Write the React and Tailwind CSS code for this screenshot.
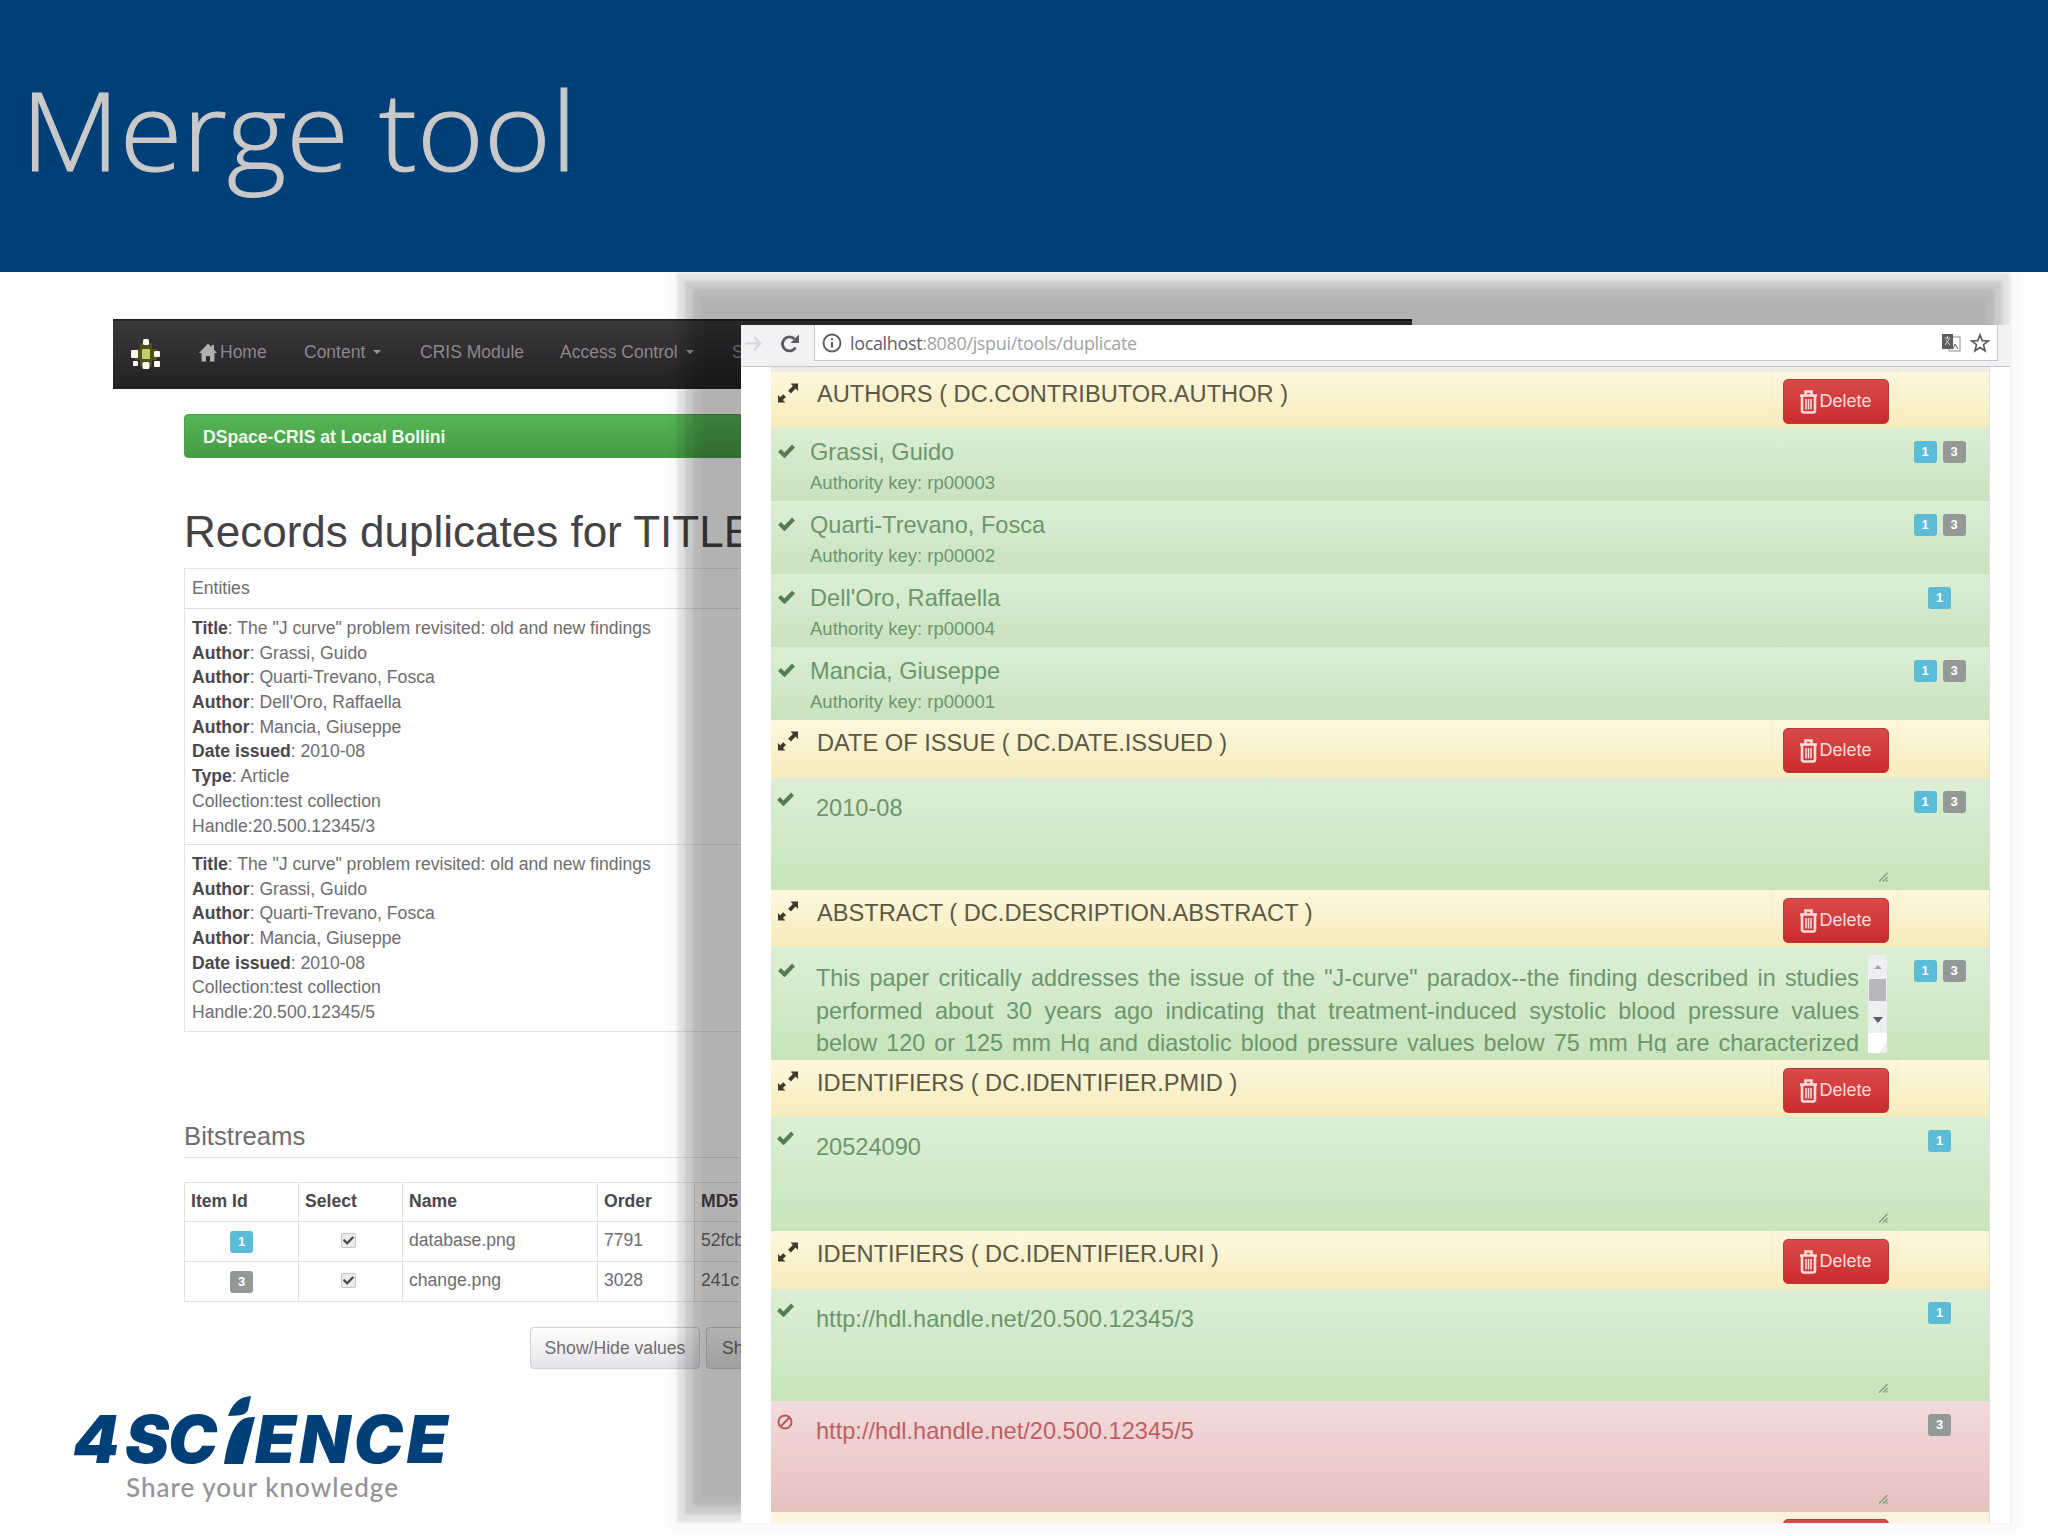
import { FaCheck } from "react-icons/fa"

const records = [
    {
        rows: [
            ["Title", ": The \"J curve\" problem revisited: old and new findings"],
            ["Author", ": Grassi, Guido"],
            ["Author", ": Quarti-Trevano, Fosca"],
            ["Author", ": Dell'Oro, Raffaella"],
            ["Author", ": Mancia, Giuseppe"],
            ["Date issued", ": 2010-08"],
            ["Type", ": Article"],
            ["", "Collection:test collection"],
            ["", "Handle:20.500.12345/3"],
        ],
    },
    {
        rows: [
            ["Title", ": The \"J curve\" problem revisited: old and new findings"],
            ["Author", ": Grassi, Guido"],
            ["Author", ": Quarti-Trevano, Fosca"],
            ["Author", ": Mancia, Giuseppe"],
            ["Date issued", ": 2010-08"],
            ["", "Collection:test collection"],
            ["", "Handle:20.500.12345/5"],
        ],
    },
]

const authors = [
    { name: "Grassi, Guido", key: "rp00003", ids: [1, 3] },
    { name: "Quarti-Trevano, Fosca", key: "rp00002", ids: [1, 3] },
    { name: "Dell'Oro, Raffaella", key: "rp00004", ids: [1] },
    { name: "Mancia, Giuseppe", key: "rp00001", ids: [1, 3] },
]

const abstractLines = [
    "This paper critically addresses the issue of the \"J-curve\" paradox--the finding described in studies",
    "performed about 30 years ago indicating that treatment-induced systolic blood pressure values",
    "below 120 or 125 mm Hg and diastolic blood pressure values below 75 mm Hg are characterized",
]

const Badge = ({ id }) => (
    <span className={`flex h-[22px] w-[23px] items-center justify-center rounded-[3px] text-[13px] font-bold text-white ${id === 1 ? "bg-[#5bbcd8]" : "bg-[#949896]"}`}>
        {id}
    </span>
)

const Badges = ({ ids }) => (
    <div className="flex w-[92px] shrink-0 items-start justify-center gap-[6px] pr-[7px] pt-[13px]">
        {ids.map((id) => <Badge key={id} id={id} />)}
    </div>
)

const CheckMark = ({ className }) => (
    <svg viewBox="0 0 17 14" className={`h-[14px] w-[17px] ${className}`} fill="none" stroke="#547d54" strokeWidth="4">
        <path d="M1.500 6.500l5 5L15.500 2" />
    </svg>
)

const ExpandIcon = () => (
    <svg viewBox="0 0 22 22" className="mt-[10px] h-[22px] w-[22px]" fill="#3f3b2c">
        <path d="M13.500 1.500h7.500v7.500l-2.400-2.400-4.700 4.900-2.800-2.800 4.800-4.800zM1 20.500v-7.500l2.200 2.200 3-3 2.800 2.800-3.100 3 2.600 2.500z" />
    </svg>
)

const TrashIcon = () => (
    <svg viewBox="0 0 19 24" className="h-6 w-[19px]" fill="none" stroke="#fbdcdc">
        <path d="M1 5.500h17M6.500 5V1.500h6V5" strokeWidth="2.600" />
        <path d="M3 6v14.500q0 2 2 2h9q2 0 2-2V6" strokeWidth="2.600" />
        <path d="M7 9v10.500M9.500 9v10.500M12 9v10.500" strokeWidth="1.500" />
    </svg>
)

const HomeIcon = () => (
    <svg viewBox="0 0 18 18" className="-mt-[6px] ml-[37px] h-[19px] w-[18px]" fill="#b1afb2">
        <path d="M9 0L0 9.500h2.500V18h4.500v-5.500h4V18h4.500V9.500H18l-3-3.200V1.500h-2.500v2.200z" />
    </svg>
)

const BanIcon = () => (
    <svg viewBox="0 0 16 16" className="mt-[11px] h-4 w-4" fill="none" stroke="#b8575a" strokeWidth="2">
        <circle cx="8" cy="8" r="6.500" />
        <path d="M3.500 12.500l9-9" />
    </svg>
)

const ResizeGrip = () => (
    <svg viewBox="0 0 10 10" className="absolute right-[9px] bottom-[8px] h-[10px] w-[10px]" stroke="#7d9a7b" fill="none">
        <path d="M1 9.500l8.500-8.500M5 9.500l4.500-4.500M8 9.500l1.500-1.500" strokeWidth="1.200" />
    </svg>
)

const DeleteButton = () => (
    <button className="flex h-[45px] w-[106px] items-center justify-center rounded-[5px] border border-[#b93c3c] bg-linear-to-b from-[#d94a48] to-[#cb2a2d] pr-px text-[18px] text-[#fbdcdc]">
        <TrashIcon />
        <span className="ml-px">Delete</span>
    </button>
)

const SectionHeader = ({ label, height = "h-[57px]", pad = "pt-2" }) => (
    <div className={`flex shrink-0 items-start bg-linear-to-b from-[#fdf7de] to-[#f7ecbb] pl-[6px] ${height}`}>
        <ExpandIcon />
        <div className={`ml-[18px] flex-1 whitespace-pre text-[23.650px] leading-[30px] text-[#5d5842] ${pad}`}>{label}</div>
        <div className={`w-[126px] border-l border-[#f8eec6] pl-[11px] ${pad}`}>
            <DeleteButton />
        </div>
        <div className="h-full w-[92px] border-l border-[#f8eec6]" />
    </div>
)

const TextRow = ({ text, ids, height, danger }) => (
    <div className={`flex shrink-0 items-start pl-[6px] bg-linear-to-b ${height} ${danger ? "from-[#f3dbdd] to-[#e5c1bd] text-[#bd6163]" : "from-[#dcefd6] to-[#c8e4bd] text-[#6d966d]"}`}>
        <div className="w-[39px] pt-[2px]">
            {danger ? <BanIcon /> : <CheckMark className="mt-[12px]" />}
        </div>
        <div className="relative h-full flex-1 pt-[15px] text-[23.600px] leading-[30px]">
            {text}
            <ResizeGrip />
        </div>
        <Badges ids={ids} />
    </div>
)

const MergePanel = () => (
    <div className="absolute left-[741px] top-[325px] flex h-[1198px] w-[1270px] flex-col overflow-hidden border-r border-[#f0eef1] bg-white">
        <div className="flex h-[42px] shrink-0 items-start border-b border-[#c9c7cb] bg-[#f2f1f3]">
            <svg viewBox="0 0 73 41" className="h-[41px] w-[73px]" fill="none">
                <path d="M4 18.500h15M13 12l6.500 6.500-6.500 6.500" stroke="#d5d4d8" strokeWidth="2" />
                <path d="M54.500 22.500a7 7 0 1 1-1-8.500" stroke="#5c5b60" strokeWidth="2.800" />
                <path d="M58 9.500v8.500h-8.500z" fill="#5c5b60" />
            </svg>
            <div className="flex h-[36px] w-[1184px] items-center border border-t-0 border-[#c6c5c9] bg-white pl-[7px] pr-[7px] pt-px">
                <svg viewBox="0 0 20 20" className="h-5 w-5" fill="none" stroke="#5c5b60" strokeWidth="1.800">
                    <circle cx="10" cy="10" r="8.500" />
                    <path d="M10 9v5.500M10 5.300v2" strokeWidth="2.200" />
                </svg>
                <div className="ml-2 flex-1 font-['Open_Sans'] text-[18px] tracking-[-0.35px] text-[#a3a2a6]">
                    <span className="text-[#5f5e63]">localhost</span>:8080/jspui/tools/duplicate
                </div>
                <svg viewBox="0 0 20 20" className="h-5 w-5">
                    <rect x="8" y="4" width="11" height="14" fill="#fff" stroke="#8a898d" />
                    <rect x="1" y="1" width="11" height="15" fill="#5c5b60" />
                    <path d="M3.500 5h6M6.500 3v3M4 12l4.500-6M5 7l4 5" stroke="#d4d3d6" fill="none" />
                    <path d="M12 16l2-5 3 5" stroke="#5c5b60" fill="none" />
                </svg>
                <svg viewBox="0 0 20 20" className="ml-[9px] h-5 w-5" fill="none" stroke="#5c5b60" strokeWidth="1.700">
                    <path d="M10 2l2.200 5.600 6 .4-4.700 3.700 1.600 6.100L10 14.500l-5.100 3.300 1.600-6.100L1.800 8l6-.4z" />
                </svg>
            </div>
        </div>
        <div className="ml-[30px] flex min-h-0 w-[1219px] flex-1 flex-col border-r border-[#e3e0e3] bg-[#efece6] pt-[5px]">
            <SectionHeader label="AUTHORS ( DC.CONTRIBUTOR.AUTHOR )" height="h-[56px]" pad="pt-[7px]" />
            {authors.map((author) => (
                <div key={author.key} className="flex h-[73px] shrink-0 items-start bg-linear-to-b from-[#dbefd5] to-[#c9e2bf] pl-[7px] text-[#6d966d]">
                    <CheckMark className="mt-4" />
                    <div className="ml-[15px] flex-1 pt-[10px]">
                        <p className="text-[23.600px] leading-[29px]">{author.name}</p>
                        <p className="text-[18.500px] leading-8">Authority key: {author.key}</p>
                    </div>
                    <Badges ids={author.ids} />
                </div>
            ))}
            <SectionHeader label="DATE OF ISSUE ( DC.DATE.ISSUED )" height="h-[58px]" />
            <TextRow text="2010-08" ids={[1, 3]} height="h-[112px]" />
            <SectionHeader label="ABSTRACT ( DC.DESCRIPTION.ABSTRACT )" />
            <div className="flex h-[113px] shrink-0 items-start bg-linear-to-b from-[#dcefd6] to-[#c8e4bd] pl-[7px] text-[#6d966d]">
                <CheckMark className="mt-[16px]" />
                <div className="ml-[21px] h-[106px] w-[1043px] overflow-hidden pt-[15px] text-[23.400px] leading-[32.500px]">
                    {abstractLines.map((line) => (
                        <p key={line} className="whitespace-nowrap [text-align-last:justify]">{line}</p>
                    ))}
                </div>
                <div className="ml-[9px] mt-2 flex h-[98px] w-[19px] flex-col items-center bg-[#efeef0] pt-[10px]">
                    <div className="border-x-4 border-b-4 border-x-transparent border-b-[#a5a4a8]" />
                    <div className="mt-[10px] h-[22px] w-[17px] bg-[#b9b7bb]" />
                    <div className="mt-[16px] border-x-[5px] border-t-[6px] border-x-transparent border-t-[#5d5c60]" />
                    <div className="mt-auto h-5 w-full bg-white [clip-path:polygon(0_0,100%_0,100%_40%,60%_100%,0_100%)]" />
                </div>
                <div className="flex-1" />
                <Badges ids={[1, 3]} />
            </div>
            <SectionHeader label="IDENTIFIERS ( DC.IDENTIFIER.PMID )" />
            <TextRow text="20524090" ids={[1]} height="h-[114px]" />
            <SectionHeader label="IDENTIFIERS ( DC.IDENTIFIER.URI )" height="h-[58px]" />
            <TextRow text="http://hdl.handle.net/20.500.12345/3" ids={[1]} height="h-[112px]" />
            <TextRow text="http://hdl.handle.net/20.500.12345/5" ids={[3]} height="h-[111px]" danger />
            {/* only the top edge of the next section is scrolled into view */}
            <div className="flex min-h-0 flex-1 justify-end overflow-hidden bg-[#fdf3de] pr-[100px] pt-[7px]">
                <div className="h-[45px] w-[106px] rounded-[5px] border border-[#b93c3c] bg-[#d94a48]" />
            </div>
        </div>
    </div>
)

const NavItem = ({ label, caret, className }) => (
    <div className={`-mt-[6px] flex shrink-0 items-center ${className}`}>
        {label}
        {caret && <span className="ml-2 border-x-4 border-t-4 border-x-transparent border-t-[#9b999c]" />}
    </div>
)

const DspaceLogo = () => (
    <svg viewBox="0 0 32 32" className="-mt-[2px] ml-px h-8 w-8">
        <path d="M10 5h12v6h5v11h-5v6H10v-6H5V11h5z" fill="#4d511c" />
        <g fill="#fdfdf0">
            <rect x="13" y="1" width="6" height="6" rx="1.500" />
            <rect x="1" y="12" width="7" height="8" rx="1" />
            <rect x="24" y="13" width="6" height="6" rx="1" />
            <rect x="3" y="23" width="5" height="5" rx="1" />
            <rect x="24" y="23" width="6" height="6" rx="1" />
            <rect x="12.500" y="24" width="7" height="7" rx="1.500" />
        </g>
        <rect x="12" y="11" width="8" height="10" rx="1" fill="#c3cc6b" />
    </svg>
)

const DuplicatesPage = () => (
    <div className="absolute left-[113px] top-[319px] w-[1299px] text-[17.600px] text-[#6f6d70]">
        <div className="flex h-[70px] items-center border-t-2 border-[#222022] bg-linear-to-b from-[#3b393b] to-[#222022] pl-[16px] text-[17.500px] text-[#8a888b]">
            <DspaceLogo />
            <HomeIcon />
            <NavItem label="Home" className="ml-[3px] w-[84px]" />
            <NavItem label="Content" caret className="w-[116px]" />
            <NavItem label="CRIS Module" className="w-[140px]" />
            <NavItem label="Access Control" caret className="w-[172px]" />
            <NavItem label="S" />
        </div>
        <div className="w-[628px] pl-[71px]">
            <div className="mt-[25px] flex h-[44px] items-center rounded-l-[4px] border border-[#48a148] bg-linear-to-b from-[#55b655] to-[#469c46] pl-[18px] pt-[2px] font-bold text-[#eefaee]">
                DSpace-CRIS at Local Bollini
            </div>
            <h1 className="mt-[49px] h-[61px] whitespace-nowrap text-[44px] leading-[50px] text-[#444246]">
                Records duplicates for TITLE
            </h1>
            <div className="border-l border-t border-[#e6e4e7]">
                <div className="flex h-[40px] items-center border-b border-[#dddbde] pl-[7px]">Entities</div>
                {records.map((record, i) => (
                    <div key={i} className={`border-b border-[#e2e0e3] pl-[7px] pt-[7px] ${i === 0 ? "h-[236px]" : "h-[187px]"}`}>
                        {record.rows.map(([name, value], j) => (
                            <p key={j} className="h-[24.700px] whitespace-nowrap leading-[24.700px]">
                                <b className="text-[#4a484c]">{name}</b>{value}
                            </p>
                        ))}
                    </div>
                ))}
            </div>
            <h4 className="mt-[88px] h-[38px] border-b border-[#e2e0e3] text-[25.700px] leading-[33px]">Bitstreams</h4>
            <div className="mt-6 grid grid-cols-[114px_104px_195px_97px_1fr] border-l border-t border-[#e2e0e3] [&>div]:flex [&>div]:items-center [&>div]:border-b [&>div]:border-r [&>div]:border-[#e2e0e3] [&>div]:whitespace-nowrap">
                {["Item Id", "Select", "Name", "Order", "MD5"].map((head) => (
                    <div key={head} className="h-[39px] pb-px pl-[6px] font-bold text-[#4a484c]">{head}</div>
                ))}
                {[[1, "database.png", "7791", "52fcb"], [3, "change.png", "3028", "241c"]].map(([id, name, order, md5]) => [
                    <div key={`${id}-id`} className="h-[40px] justify-center"><Badge id={id} /></div>,
                    <div key={`${id}-select`} className="justify-center pb-[3px] pr-[4px]">
                        <span className="flex h-[15px] w-[15px] items-center justify-center rounded-[2px] border border-[#c9c7cb] bg-[#ebeaec]">
                            <FaCheck className="h-[11px] w-[11px] text-[#444]" />
                        </span>
                    </div>,
                    <div key={`${id}-name`} className="pb-[3px] pl-[6px]">{name}</div>,
                    <div key={`${id}-order`} className="pb-[3px] pl-[6px]">{order}</div>,
                    <div key={`${id}-md5`} className="pb-[3px] pl-[6px]">{md5}</div>,
                ])}
            </div>
            <div className="mt-[25px] flex gap-[6px] pl-[346px]">
                <button className="h-[42px] w-[170px] shrink-0 rounded-[4px] border border-[#d3d1d5] bg-linear-to-b from-white to-[#e4e2e6]">Show/Hide values</button>
                <button className="h-[42px] w-[36px] shrink-0 rounded-l-[4px] border border-r-0 border-[#d3d1d5] bg-linear-to-b from-white to-[#e4e2e6] pl-[15px] text-left">Sh</button>
            </div>
        </div>
    </div>
)

const Logo = () => (
    <div className="absolute left-[73px] top-[1394px] w-[390px]">
        <div className="flex h-[76px] items-end font-['Inter'] text-[66px] leading-[62px] font-black italic text-[#003f78]">
            <span className="w-[52px]">4</span>
            <span className="w-[98px] tracking-[-1px]">SC</span>
            <svg viewBox="0 0 32 68" className="mb-[6px] h-[68px] w-[32px]" fill="currentColor">
                <path d="M5 20C9 8 16 1 28 0L25 14Q23 19 14 19.500z" />
                <path d="M1 68C4 48 9 30 20 23Q26 20.500 32 21L20 68z" />
            </svg>
            <span className="tracking-[3.500px]">ENCE</span>
        </div>
        <p className="pl-[53px] pt-px font-['Lato'] text-[26px] leading-[32px] font-medium tracking-[1px] text-[#939295]">Share your knowledge</p>
    </div>
)

// stepped drop shadow behind the merge window
const WindowShadow = () => (
    <div className="absolute left-[668px] top-[264px] bg-black/1 p-[9px] blur-[1.500px]">
        <div className="bg-black/10 p-2">
            <div className="bg-black/10 p-2">
                <div className="bg-black/9 p-2">
                    <div className="h-[1201px] w-[1285px] bg-black/4" />
                </div>
            </div>
        </div>
    </div>
)

export default function App() {
    return (
        <div className="relative h-[1536px] w-[2048px] overflow-hidden bg-[#fefefe] font-['Liberation_Sans',sans-serif]">
            <header className="flex h-[272px] items-center bg-[#003f77] pl-[21px]">
                <h1 className="origin-left scale-x-[1.058] whitespace-nowrap pb-[13px] font-['Open_Sans'] text-[108px] leading-none font-light text-[#c9c9c9] [-webkit-text-stroke:1px_#c9c9c9]">Merge tool</h1>
            </header>
            <DuplicatesPage />
            <Logo />
            <WindowShadow />
            <MergePanel />
        </div>
    )
}
